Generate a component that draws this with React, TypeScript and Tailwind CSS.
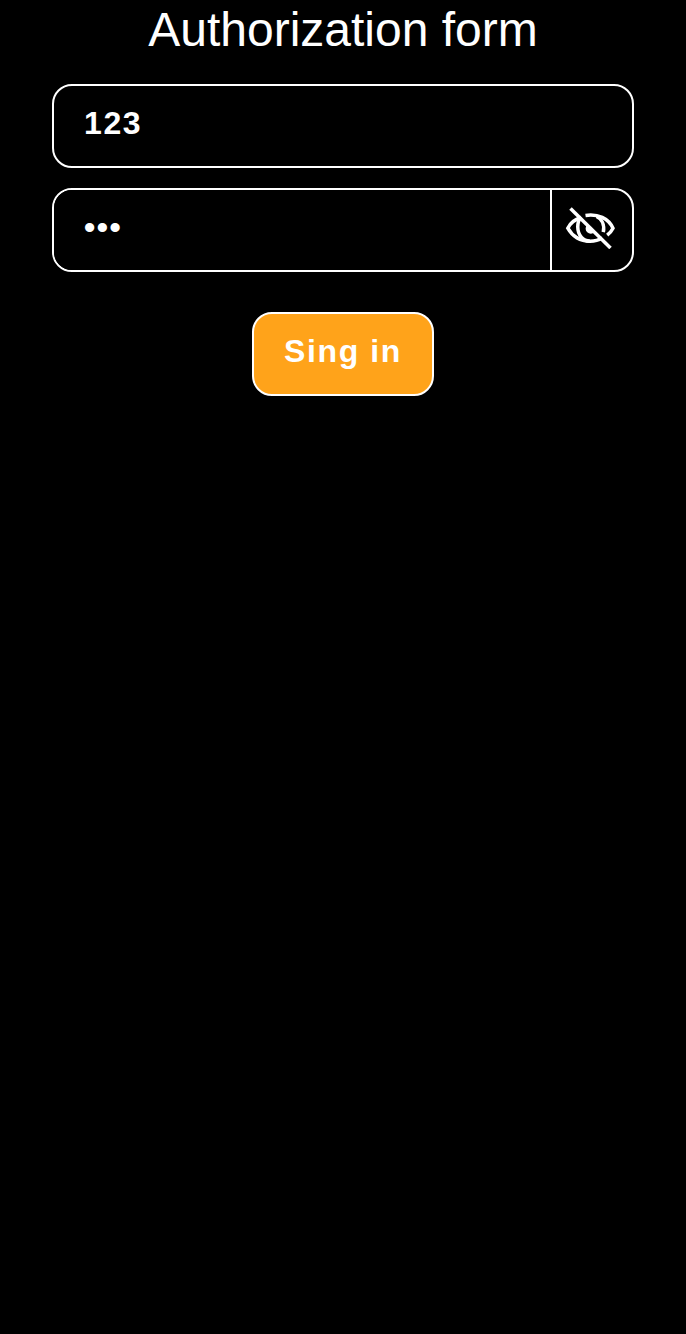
import { useState } from "react";

function EyeOffIcon() {
  return (
    <svg width="50" height="44" viewBox="0 0 50 44" fill="none" stroke="#fff" strokeWidth="3.5">
      <path d="M16 12.500C9.500 14.500 5 18.500 2.800 23.200C7.500 31.500 15.500 36.200 25 36.200C30 36.200 34 35 37.200 33" />
      <path d="M20.500 10.400C33 8.500 43.500 13.500 48 23.200Q46 27.200 42.200 30.200" />
      <path d="M16 12.200C11.700 17 11.500 27 16.500 32.500Q19.500 36 25 36.200" />
      <path d="M31.500 11.500C37 14 39.800 20 38.300 27.200" />
      <path d="M22 20A4.800 4.800 0 1 0 29.500 27Z" fill="#fff" stroke="none" />
      <path d="M5.500 3.500L45.500 43" />
    </svg>
  );
}

export default function App() {
  const [login, setLogin] = useState("123");
  const [password, setPassword] = useState("123");
  const [visible, setVisible] = useState(false);
  return (
    <main className="min-h-screen bg-black font-['Liberation_Sans',sans-serif] text-white">
      <form className="flex flex-col items-center px-[52px]" onSubmit={(e) => e.preventDefault()}>
        <h1 className="mb-6 text-[48px] leading-[60px]">Authorization form</h1>
        <input
          aria-label="Login"
          className="mb-5 h-[84px] w-full rounded-[20px] border-2 border-white bg-black px-[30px] pb-[6px] text-[32px] font-bold tracking-[1.6px] outline-none"
          value={login}
          onChange={(e) => setLogin(e.target.value)}
        />
        <div className="mb-10 flex h-[84px] w-full overflow-hidden rounded-[20px] border-2 border-white">
          <input
            aria-label="Password"
            className="min-w-0 flex-1 bg-black px-[30px] pb-[6px] text-[32px] font-bold tracking-[1.6px] outline-none"
            type={visible ? "text" : "password"}
            value={password}
            onChange={(e) => setPassword(e.target.value)}
          />
          <button
            type="button"
            aria-label="Toggle password"
            className="flex w-[82px] items-center justify-center border-l-2 border-white pr-1 pb-[6px]"
            onClick={() => setVisible(!visible)}
          >
            <EyeOffIcon />
          </button>
        </div>
        <button
          type="submit"
          className="h-[84px] rounded-[20px] border-2 border-white bg-[#ffa31a] px-[30px] pb-[6px] text-[32px] font-bold tracking-[1.6px]"
        >
          Sing in
        </button>
      </form>
    </main>
  );
}
